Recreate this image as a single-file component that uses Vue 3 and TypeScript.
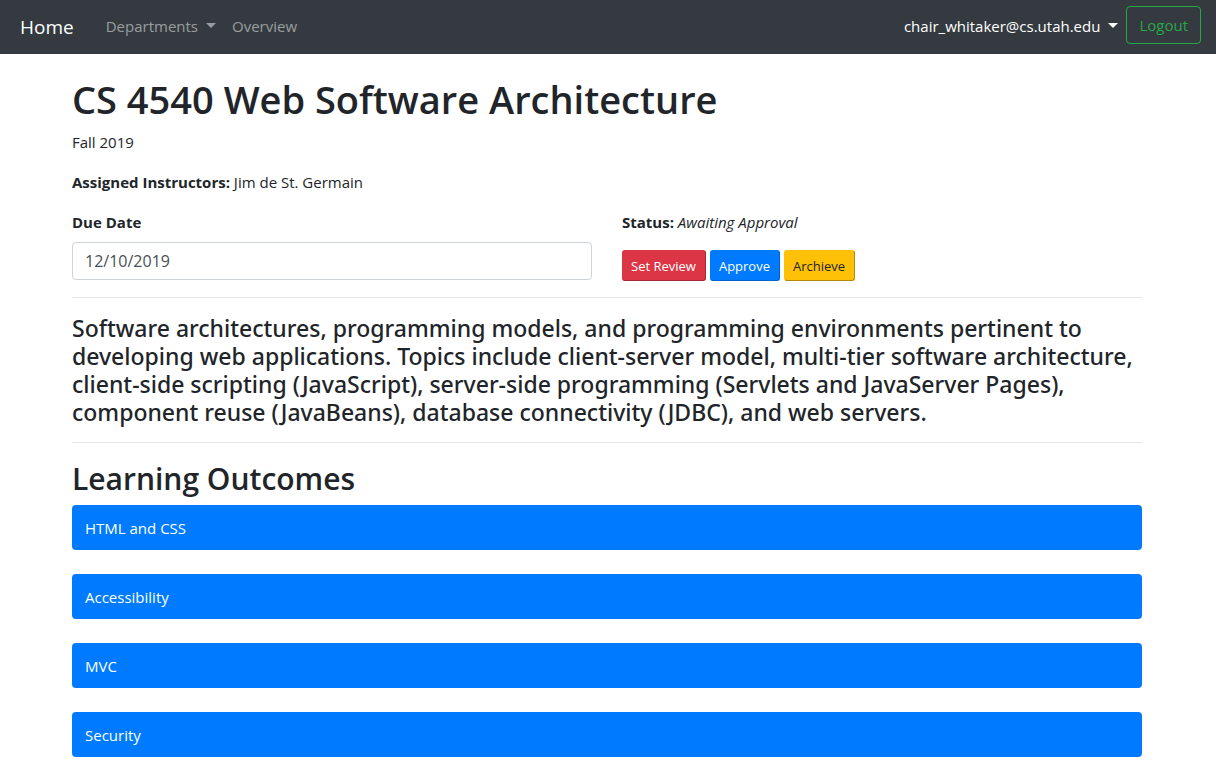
<script setup lang="ts">
import { ref } from 'vue'

interface Action {
  label: string
  kind: string
}

const dueDate = ref('12/10/2019')

const actions: Action[] = [
  { label: 'Set Review', kind: 'danger' },
  { label: 'Approve', kind: 'primary' },
  { label: 'Archieve', kind: 'warning' },
]

const outcomes: string[] = ['HTML and CSS', 'Accessibility', 'MVC', 'Security']
</script>

<template>
  <nav class="navbar">
    <a class="brand" href="#">Home</a>
    <a class="nav-link caret" href="#">Departments</a>
    <a class="nav-link" href="#">Overview</a>
    <a class="nav-link account caret" href="#">chair_whitaker@cs.utah.edu</a>
    <button class="logout" type="button">Logout</button>
  </nav>

  <main class="page">
    <h1>CS 4540 Web Software Architecture</h1>
    <p>Fall 2019</p>
    <p><strong>Assigned Instructors:</strong> Jim de St. Germain</p>

    <div class="row">
      <div class="field">
        <label for="due-date">Due Date</label>
        <input id="due-date" v-model="dueDate" type="text" />
      </div>
      <div>
        <p><strong>Status:</strong> <em>Awaiting Approval</em></p>
        <div class="actions">
          <button
            v-for="action in actions"
            :key="action.label"
            type="button"
            class="action"
            :class="action.kind"
          >{{ action.label }}</button>
        </div>
      </div>
    </div>

    <hr />
    <h4>
      Software architectures, programming models, and programming environments pertinent to
      developing web applications. Topics include client-server model, multi-tier software architecture,
      client-side scripting (JavaScript), server-side programming (Servlets and JavaServer Pages),
      component reuse (JavaBeans), database connectivity (JDBC), and web servers.
    </h4>
    <hr />

    <h2>Learning Outcomes</h2>
    <div class="outcomes">
      <button v-for="outcome in outcomes" :key="outcome" type="button" class="outcome">{{ outcome }}</button>
    </div>
  </main>
</template>

<style>
body {
  margin: 0;
  background: #fff;
}
</style>

<style scoped>
.navbar,
.page {
  font-family: 'Segoe UI', 'Open Sans', 'Noto Sans', sans-serif;
  font-size: 15px;
  line-height: 24px;
  color: #212529;
}

button,
input {
  box-sizing: border-box;
  font-family: inherit;
}

.navbar {
  display: flex;
  align-items: center;
  box-sizing: border-box;
  height: 54px;
  padding: 0 15px 4px 20px;
  background: #343a40;
}

.navbar a {
  text-decoration: none;
}

.brand {
  margin-right: 24px;
  padding-top: 3px;
  font-size: 19px;
  color: #fff;
}

.nav-link {
  padding: 2px 8px 0;
  color: rgba(255, 255, 255, 0.5);
}

.account {
  margin-left: auto;
  color: #fff;
}

.caret::after {
  content: '';
  display: inline-block;
  margin-left: 8px;
  vertical-align: 4px;
  border-top: 5px solid;
  border-right: 5px solid transparent;
  border-left: 5px solid transparent;
}

.logout {
  height: 38px;
  padding: 0 12px;
  border: 1px solid #28a745;
  border-radius: 4px;
  background: transparent;
  color: #28a745;
  font-size: 15px;
}

.page {
  padding: 22px 74px 9px 72px;
}

h1,
h2,
h4 {
  margin: 0 0 8px;
  font-weight: 600;
}

h1 {
  font-size: 38px;
  line-height: 46px;
}

h2 {
  margin: 0 0 6px;
  font-size: 30px;
  line-height: 40px;
}

h4 {
  margin: 0;
  font-family: 'Segoe UI', 'Noto Sans', sans-serif;
  font-size: 23px;
  font-weight: 500;
  line-height: 28px;
}

p {
  margin: 0 0 16px;
}

.row {
  display: grid;
  grid-template-columns: 1fr 1fr;
  column-gap: 30px;
}

.field label {
  display: block;
  margin-bottom: 8px;
  font-weight: 700;
}

.field input {
  width: 100%;
  height: 38px;
  padding: 6px 12px;
  border: 1px solid #ced4da;
  border-radius: 4px;
  background: #fff;
  color: #495057;
  font-size: 16px;
}

.actions {
  display: flex;
  gap: 4px;
}

.action {
  height: 31px;
  padding: 0 9px 0 8px;
  border: 1px solid;
  border-radius: 3px;
  font-size: 13px;
}

.danger {
  border-color: #dc3545 #a52834 #a52834 #dc3545;
  background: #dc3545;
  color: #fff;
}

.primary {
  border-color: #007bff #0062cc #0062cc #007bff;
  background: #007bff;
  color: #fff;
}

.warning {
  border-color: #ffc107 #b58a0b #b58a0b #ffc107;
  background: #ffc107;
  color: #212529;
}

hr {
  margin: 16px 0;
  border: 0;
  border-top: 1px solid #e5e5e5;
}

.outcomes {
  display: flex;
  flex-direction: column;
  gap: 24px;
}

.outcome {
  height: 45px;
  padding: 0 13px;
  border: 0;
  border-radius: 4px;
  background: #007bff;
  color: #fff;
  font-size: 15px;
  text-align: left;
}
</style>
